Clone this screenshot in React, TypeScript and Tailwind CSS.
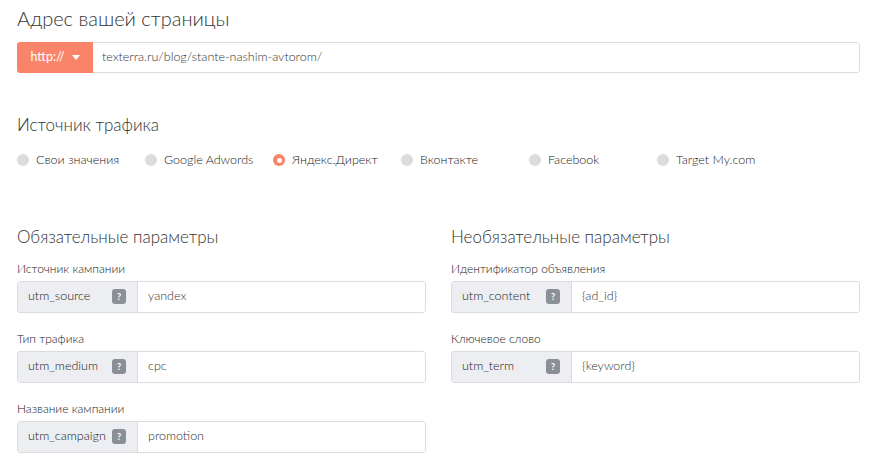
import { useState } from 'react';

const sources = ['Свои значения', 'Google Adwords', 'Яндекс.Директ', 'Вконтакте', 'Facebook', 'Target My.com'];

type Field = { label: string; param: string; value: string };

const required: Field[] = [
    { label: 'Источник кампании', param: 'utm_source', value: 'yandex' },
    { label: 'Тип трафика', param: 'utm_medium', value: 'cpc' },
    { label: 'Название кампании', param: 'utm_campaign', value: 'promotion' },
];

const optional: Field[] = [
    { label: 'Идентификатор объявления', param: 'utm_content', value: '{ad_id}' },
    { label: 'Ключевое слово', param: 'utm_term', value: '{keyword}' },
];

function ParamInput({ field }: { field: Field }) {
    return (
        <div className="mb-[18px]">
            <div className="text-[12px] leading-[16px] font-light text-[#222] mb-[4px]">{field.label}</div>
            <div className="flex h-[32px] border border-[#dcdcdc] rounded-[3px] overflow-hidden">
                <div className="w-[120px] shrink-0 bg-[#eceef1] border-r border-[#dcdcdc] flex items-center justify-between pl-[10px] pr-[11px]">
                    <span className="text-[12.5px] font-light text-[#222]">{field.param}</span>
                    <span className="w-[14px] h-[15px] rounded-[3px] bg-[#8b9097] text-white text-[9px] font-bold flex items-center justify-center">?</span>
                </div>
                <div className="flex-1 flex items-center px-[10px] text-[12.5px] font-light text-[#333] bg-white">{field.value}</div>
            </div>
        </div>
    );
}

export default function App() {
    const [active, setActive] = useState(2);

    return (
        <div className="w-[878px] h-[460px] bg-white px-[17px] pt-[4px] overflow-hidden" style={{ fontFamily: 'Lato, "Noto Sans", sans-serif' }}>
            <h1 className="text-[20px] leading-[28px] font-light text-[#333]">Адрес вашей страницы</h1>

            <div className="mt-[10px] flex h-[31px] border border-[#dcdcdc] rounded-[3px] w-[843px]">
                <button className="w-[76px] shrink-0 bg-[#f98469] rounded-l-[3px] flex items-center justify-center gap-[7px] text-white text-[12.5px] -m-px h-[31px]">
                    http://
                    <svg width="8" height="5" viewBox="0 0 8 5"><path d="M0 0h8L4 5z" fill="#fff" /></svg>
                </button>
                <div className="flex-1 flex items-center pl-[10px] text-[12.5px] font-light text-[#333]">texterra.ru/blog/stante-nashim-avtorom/</div>
            </div>

            <h2 className="mt-[40px] text-[17px] leading-[24px] font-light text-[#333]">Источник трафика</h2>

            <div className="mt-[14px] flex">
                {sources.map((s, i) => (
                    <label key={s} className="w-[128px] flex items-center gap-[7px] cursor-pointer" onClick={() => setActive(i)}>
                        {i === active ? (
                            <span className="w-[12px] h-[12px] rounded-full bg-[#f98469] flex items-center justify-center">
                                <span className="w-[5px] h-[5px] rounded-full bg-white" />
                            </span>
                        ) : (
                            <span className="w-[12px] h-[12px] rounded-full bg-[#dcdcdc]" />
                        )}
                        <span className="text-[12.5px] font-light text-[#222]">{s}</span>
                    </label>
                ))}
            </div>

            <div className="mt-[55px] grid grid-cols-2 gap-[25px] w-[843px]">
                <div>
                    <h2 className="text-[17px] leading-[24px] font-light text-[#333] mb-[12px]">Обязательные параметры</h2>
                    {required.map((f) => (
                        <ParamInput key={f.param} field={f} />
                    ))}
                </div>
                <div>
                    <h2 className="text-[17px] leading-[24px] font-light text-[#333] mb-[12px]">Необязательные параметры</h2>
                    {optional.map((f) => (
                        <ParamInput key={f.param} field={f} />
                    ))}
                </div>
            </div>
        </div>
    );
}
